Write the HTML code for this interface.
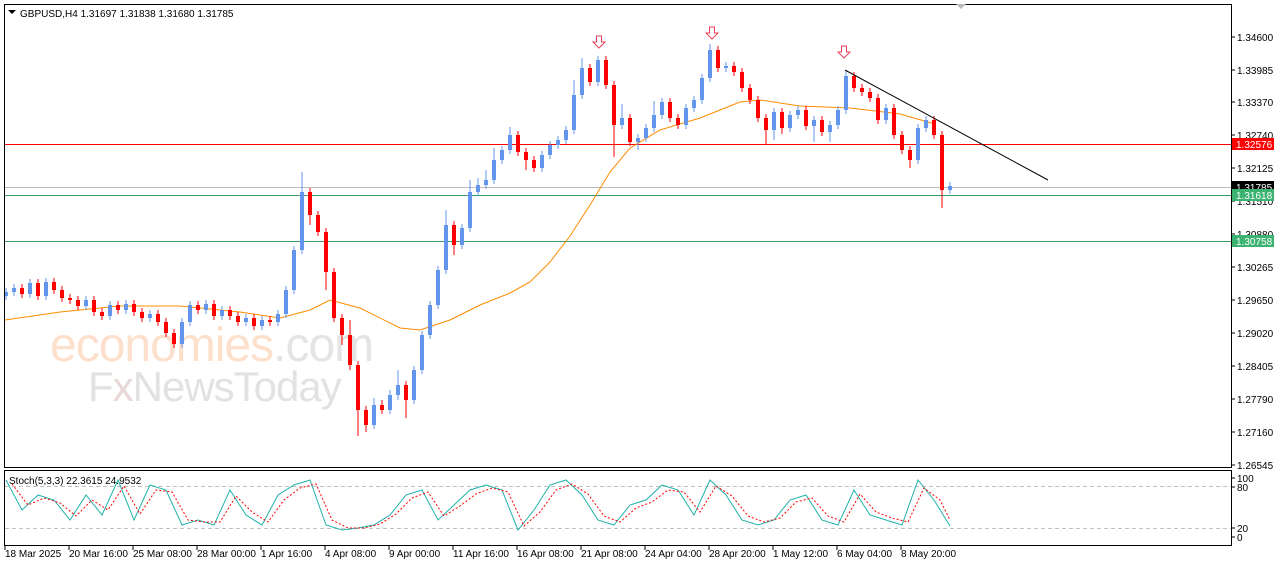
<!DOCTYPE html><html><head><meta charset="utf-8"><style>
html,body{margin:0;padding:0;background:#fff;width:1280px;height:567px;overflow:hidden}
svg{display:block;font-family:"Liberation Sans",sans-serif}
</style></head><body>
<svg width="1280" height="567" xmlns="http://www.w3.org/2000/svg" font-family="Liberation Sans, sans-serif" font-size="10">
<rect width="1280" height="567" fill="#fff"/>
<text x="50" y="361" font-size="48" fill="#fde0cc" letter-spacing="-1">economies<tspan fill="#e4e4e4">.com</tspan></text>
<text x="88" y="401" font-size="42" fill="#e2e2e2" letter-spacing="-1">F<tspan fill="#e8d8d8">x</tspan>NewsToday</text>

<!-- hlines -->
<line x1="5" y1="144.5" x2="1231" y2="144.5" stroke="#f00"/>
<line x1="5" y1="187.5" x2="1231" y2="187.5" stroke="#bbb"/>
<line x1="5" y1="195.5" x2="1231" y2="195.5" stroke="#3a9a6a"/>
<line x1="5" y1="241.5" x2="1231" y2="241.5" stroke="#3a9a6a"/>

<!-- MA -->
<polyline fill="none" stroke="#ff8c00" points="5,320 60,312 120,306 180,306 240,312 280,318 310,310 330,300 360,308 400,328 420,330 450,320 480,305 510,293 530,282 550,262 570,236 590,205 610,172 630,148 660,130 700,118 740,102 760,100 800,106 850,108 900,114 935,124"/>

<!-- blue candles -->
<path fill="none" stroke="#6495ed" stroke-width="1" d="M6 288V300M14 284V296M30 279V298M46 278V300M86 296V310M110 301V320M126 300V314M150 310V322M182 318V348M190 301V326M206 300V314M222 306V320M246 314V326M262 316V330M278 310V326M286 286V318M294 246V294M302 172V254M374 398V429M390 390V414M398 370V400M414 366V404M422 331V374M430 301V339M438 266V309M446 210V274M462 224V249M470 180V232M478 178V196M486 170V189M494 148V184M502 146V164M510 127V154M542 151V172M550 141V159M558 136V149M566 126V144M574 80V134M582 58V99M598 56V86M622 104V129M638 134V150M646 124V142M654 101V132M662 98V119M686 104V129M694 96V112M702 74V104M710 44V82M726 62V72M774 108V140M790 111V132M798 106V119M814 116V142M830 121V142M838 106V129M846 70V114M886 104V124M918 124V164M926 116V132M950 182V194"/>
<path fill="none" stroke="#6495ed" stroke-width="4" d="M6 292V296M14 288V292M30 283V294M46 282V296M86 300V306M110 305V316M126 304V310M150 314V318M182 322V344M190 305V322M206 304V310M222 310V316M246 318V322M262 320V326M278 314V322M286 290V314M294 250V290M302 192V250M374 405V425M390 395V410M398 385V395M414 370V400M422 335V370M430 305V335M438 270V305M446 225V270M462 228V245M470 192V228M478 185V192M486 180V185M494 160V180M502 150V160M510 135V150M542 155V168M550 145V155M558 140V145M566 130V140M574 95V130M582 68V95M598 60V82M622 118V125M638 138V142M646 128V138M654 115V128M662 102V115M686 108V125M694 100V108M702 78V100M710 50V78M726 66V68M774 112V130M790 115V128M798 110V115M814 120V126M830 125V132M838 110V125M846 76V110M886 108V120M918 128V160M926 120V128M950 186V190"/>
<!-- red candles -->
<path fill="none" stroke="#f00" stroke-width="1" d="M22 284V298M38 279V300M54 278V294M62 286V302M70 294V304M78 296V310M94 296V316M102 308V320M118 301V314M134 300V316M142 308V322M158 310V326M166 318V337M174 329V348M198 301V314M214 300V320M230 306V320M238 312V326M254 314V330M270 316V326M310 188V225M318 211V236M326 228V290M334 268V322M342 314V345M350 320V370M358 361V436M366 406V432M382 400V414M406 381V418M454 221V255M518 131V156M526 148V170M534 156V172M590 64V86M606 56V89M614 81V157M630 114V146M670 98V122M678 114V129M718 46V72M734 62V76M742 68V92M750 84V104M758 96V122M766 114V144M782 108V134M806 106V130M822 116V136M854 72V92M862 84V96M870 88V102M878 94V124M894 104V139M902 131V154M910 146V168M934 116V139M942 131V208"/>
<path fill="none" stroke="#f00" stroke-width="4" d="M22 288V294M38 283V296M54 282V290M62 290V298M70 298V300M78 300V306M94 300V312M102 312V316M118 305V310M134 304V312M142 312V318M158 314V322M166 322V333M174 333V344M198 305V310M214 304V316M230 310V316M238 316V322M254 318V326M270 320V322M310 192V215M318 215V232M326 232V272M334 272V318M342 318V335M350 335V365M358 365V410M366 410V425M382 405V410M406 385V400M454 225V245M518 135V152M526 152V160M534 160V168M590 68V82M606 60V85M614 85V125M630 118V142M670 102V118M678 118V125M718 50V68M734 66V72M742 72V88M750 88V100M758 100V118M766 118V130M782 112V128M806 110V126M822 120V132M854 76V88M862 88V92M870 92V98M878 98V120M894 108V135M902 135V150M910 150V160M934 120V135M942 135V190"/>

<!-- trend -->
<line x1="845" y1="70" x2="1048" y2="180" stroke="#000"/>
<!-- arrows -->
<polygon points="596.5,36 601.5,36 601.5,42 605,42 599,48 593,42 596.5,42" fill="#fff" stroke="#e8405a"/>
<polygon points="709.5,27 714.5,27 714.5,33 718,33 712,39 706,33 709.5,33" fill="#fff" stroke="#e8405a"/>
<polygon points="841.5,46 846.5,46 846.5,52 850,52 844,58 838,52 841.5,52" fill="#fff" stroke="#e8405a"/>

<!-- frames -->
<rect x="4.5" y="4.5" width="1227" height="463" fill="none" stroke="#000"/>
<rect x="4.5" y="470.5" width="1227" height="75" fill="none" stroke="#000"/>
<polygon points="956,4 966,4 961,9" fill="#bbb"/>
<polygon points="8,10 16,10 12,14" fill="#000"/>
<text x="20" y="17">GBPUSD,H4  1.31697 1.31838 1.31680 1.31785</text>

<!-- price axis -->
<g stroke="#000"><path d="M1232 37h3M1232 70h3M1232 102h3M1232 135h3M1232 168h3M1232 201h3M1232 234h3M1232 267h3M1232 300h3M1232 333h3M1232 366h3M1232 399h3M1232 432h3M1232 465h3M1232 478h3M1232 487h3M1232 528h3M1232 537h3"/></g>
<g fill="#000">
<text x="1237" y="41">1.34600</text><text x="1237" y="74">1.33985</text><text x="1237" y="106">1.33370</text><text x="1237" y="139">1.32740</text><text x="1237" y="172">1.32125</text><text x="1237" y="205">1.31510</text><text x="1237" y="238">1.30880</text><text x="1237" y="271">1.30265</text><text x="1237" y="304">1.29650</text><text x="1237" y="337">1.29020</text><text x="1237" y="370">1.28405</text><text x="1237" y="403">1.27790</text><text x="1237" y="436">1.27160</text><text x="1237" y="469">1.26545</text>
<text x="1237" y="482">100</text><text x="1237" y="491">80</text><text x="1237" y="532">20</text><text x="1237" y="541">0</text>
</g>
<rect x="1232" y="138" width="42" height="12" fill="#f00"/><text x="1236" y="148" fill="#fff">1.32576</text>
<rect x="1232" y="181" width="42" height="12" fill="#000"/><text x="1236" y="191" fill="#fff">1.31785</text>
<rect x="1232" y="189" width="42" height="12" fill="#3cb371"/><text x="1236" y="199" fill="#fff">1.31618</text>
<rect x="1232" y="235" width="42" height="12" fill="#3cb371"/><text x="1236" y="245" fill="#fff">1.30758</text>

<!-- stoch -->
<line x1="5" y1="486.5" x2="1231" y2="486.5" stroke="#c0c0c0" stroke-dasharray="4,3"/>
<line x1="5" y1="528.5" x2="1231" y2="528.5" stroke="#c0c0c0" stroke-dasharray="4,3"/>
<polyline fill="none" stroke="#20b2aa" points="6,480 22,510 38,495 54,500 70,520 86,495 102,515 118,480 134,520 150,485 166,490 182,525 198,520 214,525 230,490 246,515 262,525 278,495 294,485 310,480 326,525 342,530 358,528 374,525 390,515 406,495 422,490 438,520 454,505 470,490 486,485 502,490 518,530 534,510 550,485 566,480 582,495 598,520 614,525 630,505 646,500 662,485 678,490 694,515 710,480 726,495 742,520 758,525 774,520 790,500 806,495 822,520 838,525 854,490 870,515 886,520 902,525 918,480 934,500 950,526"/>
<polyline fill="none" stroke="#f00" stroke-dasharray="2,2" points="12,484 28,505 44,498 60,503 76,516 92,500 108,510 124,486 140,514 156,490 172,492 188,520 204,522 220,522 236,496 252,512 268,522 284,500 300,488 316,484 332,520 348,528 364,528 380,524 396,514 412,498 428,492 444,516 460,506 476,494 492,488 508,492 524,526 540,512 556,490 572,484 588,494 604,516 620,522 636,508 652,502 668,490 684,492 700,512 716,486 732,496 748,516 764,522 780,518 796,502 812,498 828,516 844,522 860,494 876,512 892,518 908,522 924,488 940,500 950,520"/>
<text x="9" y="484">Stoch(5,3,3) 22.3615 24.9532</text>

<!-- time axis -->
<g stroke="#000"><path d="M5 546v4M69 546v4M133 546v4M197 546v4M261 546v4M325 546v4M389 546v4M453 546v4M517 546v4M581 546v4M645 546v4M709 546v4M773 546v4M837 546v4M901 546v4"/></g>
<g fill="#000">
<text x="5" y="557">18 Mar 2025</text><text x="69" y="557">20 Mar 16:00</text><text x="133" y="557">25 Mar 08:00</text><text x="197" y="557">28 Mar 00:00</text><text x="261" y="557">1 Apr 16:00</text><text x="325" y="557">4 Apr 08:00</text><text x="389" y="557">9 Apr 00:00</text><text x="453" y="557">11 Apr 16:00</text><text x="517" y="557">16 Apr 08:00</text><text x="581" y="557">21 Apr 08:00</text><text x="645" y="557">24 Apr 04:00</text><text x="709" y="557">28 Apr 20:00</text><text x="773" y="557">1 May 12:00</text><text x="837" y="557">6 May 04:00</text><text x="901" y="557">8 May 20:00</text>
</g>
</svg>
</body></html>
